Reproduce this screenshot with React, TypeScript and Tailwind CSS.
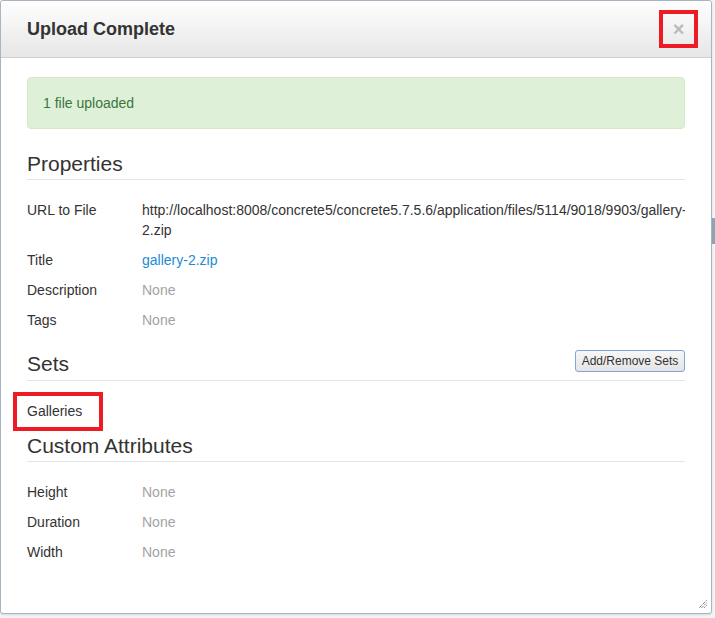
const rows1 = [
  { label: "Title", value: "gallery-2.zip", link: true },
  { label: "Description", value: "None", muted: true },
  { label: "Tags", value: "None", muted: true },
];

const rows2 = [
  { label: "Height", value: "None" },
  { label: "Duration", value: "None" },
  { label: "Width", value: "None" },
];

function Row({ label, children }: { label: string; children: React.ReactNode }) {
  return (
    <div className="grid grid-cols-[115px_1fr] leading-[20px]">
      <div>{label}</div>
      <div className="overflow-hidden">{children}</div>
    </div>
  );
}

export default function App() {
  return (
    <div className="relative h-[618px] w-[715px] overflow-hidden bg-[#f3f4f5] font-['Liberation_Sans',Arial,sans-serif] text-[14px] text-[#333]">
      <div className="relative flex h-[614px] w-[712px] flex-col rounded-[3px] border border-[#a9b6c2] bg-white shadow-[0_1px_2px_rgba(0,0,0,0.12)]">
        {/* header */}
        <div className="flex h-[57px] shrink-0 items-center justify-between rounded-t-[3px] border-b border-[#d0d0d0] bg-gradient-to-b from-white to-[#e6e6e6] pl-[26px] pr-[13px]">
          <h2 className="pt-[1px] text-[18px] font-bold text-[#333]">Upload Complete</h2>
          <div className="flex h-[38px] w-[39px] items-center justify-center border-[4px] border-[#ed1c24]">
            <span className="text-[20px] font-bold leading-none text-[#bbbbbb]">×</span>
          </div>
        </div>

        {/* body */}
        <div className="flex flex-col px-[26px] pt-[19px]">
          <div className="rounded-[4px] border border-[#d6e9c6] bg-[#dff0d8] p-[15px] leading-[20px] text-[#3c763d]">
            1 file uploaded
          </div>

          <h3 className="mt-[23px] border-b border-[#e5e5e5] pb-[4px] text-[21px] leading-[23px]">Properties</h3>

          <div className="mt-[20px] flex flex-col gap-[10px]">
            <Row label="URL to File">
              http://localhost:8008/concrete5/concrete5.7.5.6/application/files/5114/9018/9903/gallery-2.zip
            </Row>
            {rows1.map((r) => (
              <Row key={r.label} label={r.label}>
                <span className={r.link ? "text-[#1d8bd4]" : "text-[#a3a3a3]"}>{r.value}</span>
              </Row>
            ))}
          </div>

          <div className="mt-[20px] flex items-start justify-between border-b border-[#e5e5e5] pb-[5px]">
            <h3 className="pt-[2px] text-[21px] leading-[23px]">Sets</h3>
            <button className="h-[22px] w-[110px] rounded-[3px] border border-[#7fa6dc] bg-gradient-to-b from-[#f7f7f7] to-[#e4e4e4] text-[12px] leading-[20px] text-[#333]">
              Add/Remove Sets
            </button>
          </div>

          <div className="relative mt-[20px] w-fit leading-[20px]">
            Galleries
            <span className="absolute -bottom-[10px] -left-[14px] -right-[21px] -top-[9px] border-[4px] border-[#ed1c24]" />
          </div>

          <h3 className="mt-[13px] border-b border-[#e5e5e5] pb-[4px] text-[21px] leading-[23px]">Custom Attributes</h3>

          <div className="mt-[20px] flex flex-col gap-[10px]">
            {rows2.map((r) => (
              <Row key={r.label} label={r.label}>
                <span className="text-[#a3a3a3]">{r.value}</span>
              </Row>
            ))}
          </div>
        </div>

        {/* resize grip */}
        <svg className="absolute bottom-[5px] right-[4px]" width="9" height="8" viewBox="0 0 9 8">
          <path d="M8.5 0.5 L1 8 M8.5 3 L3.5 8 M8.5 5.5 L6 8" stroke="#444" strokeWidth="1" strokeDasharray="1 1" />
        </svg>
      </div>

      {/* page scrollbar thumb peeking out */}
      <div className="absolute left-[712px] top-[218px] h-[26px] w-[3px] bg-[#8ea4b4]" />
    </div>
  );
}
